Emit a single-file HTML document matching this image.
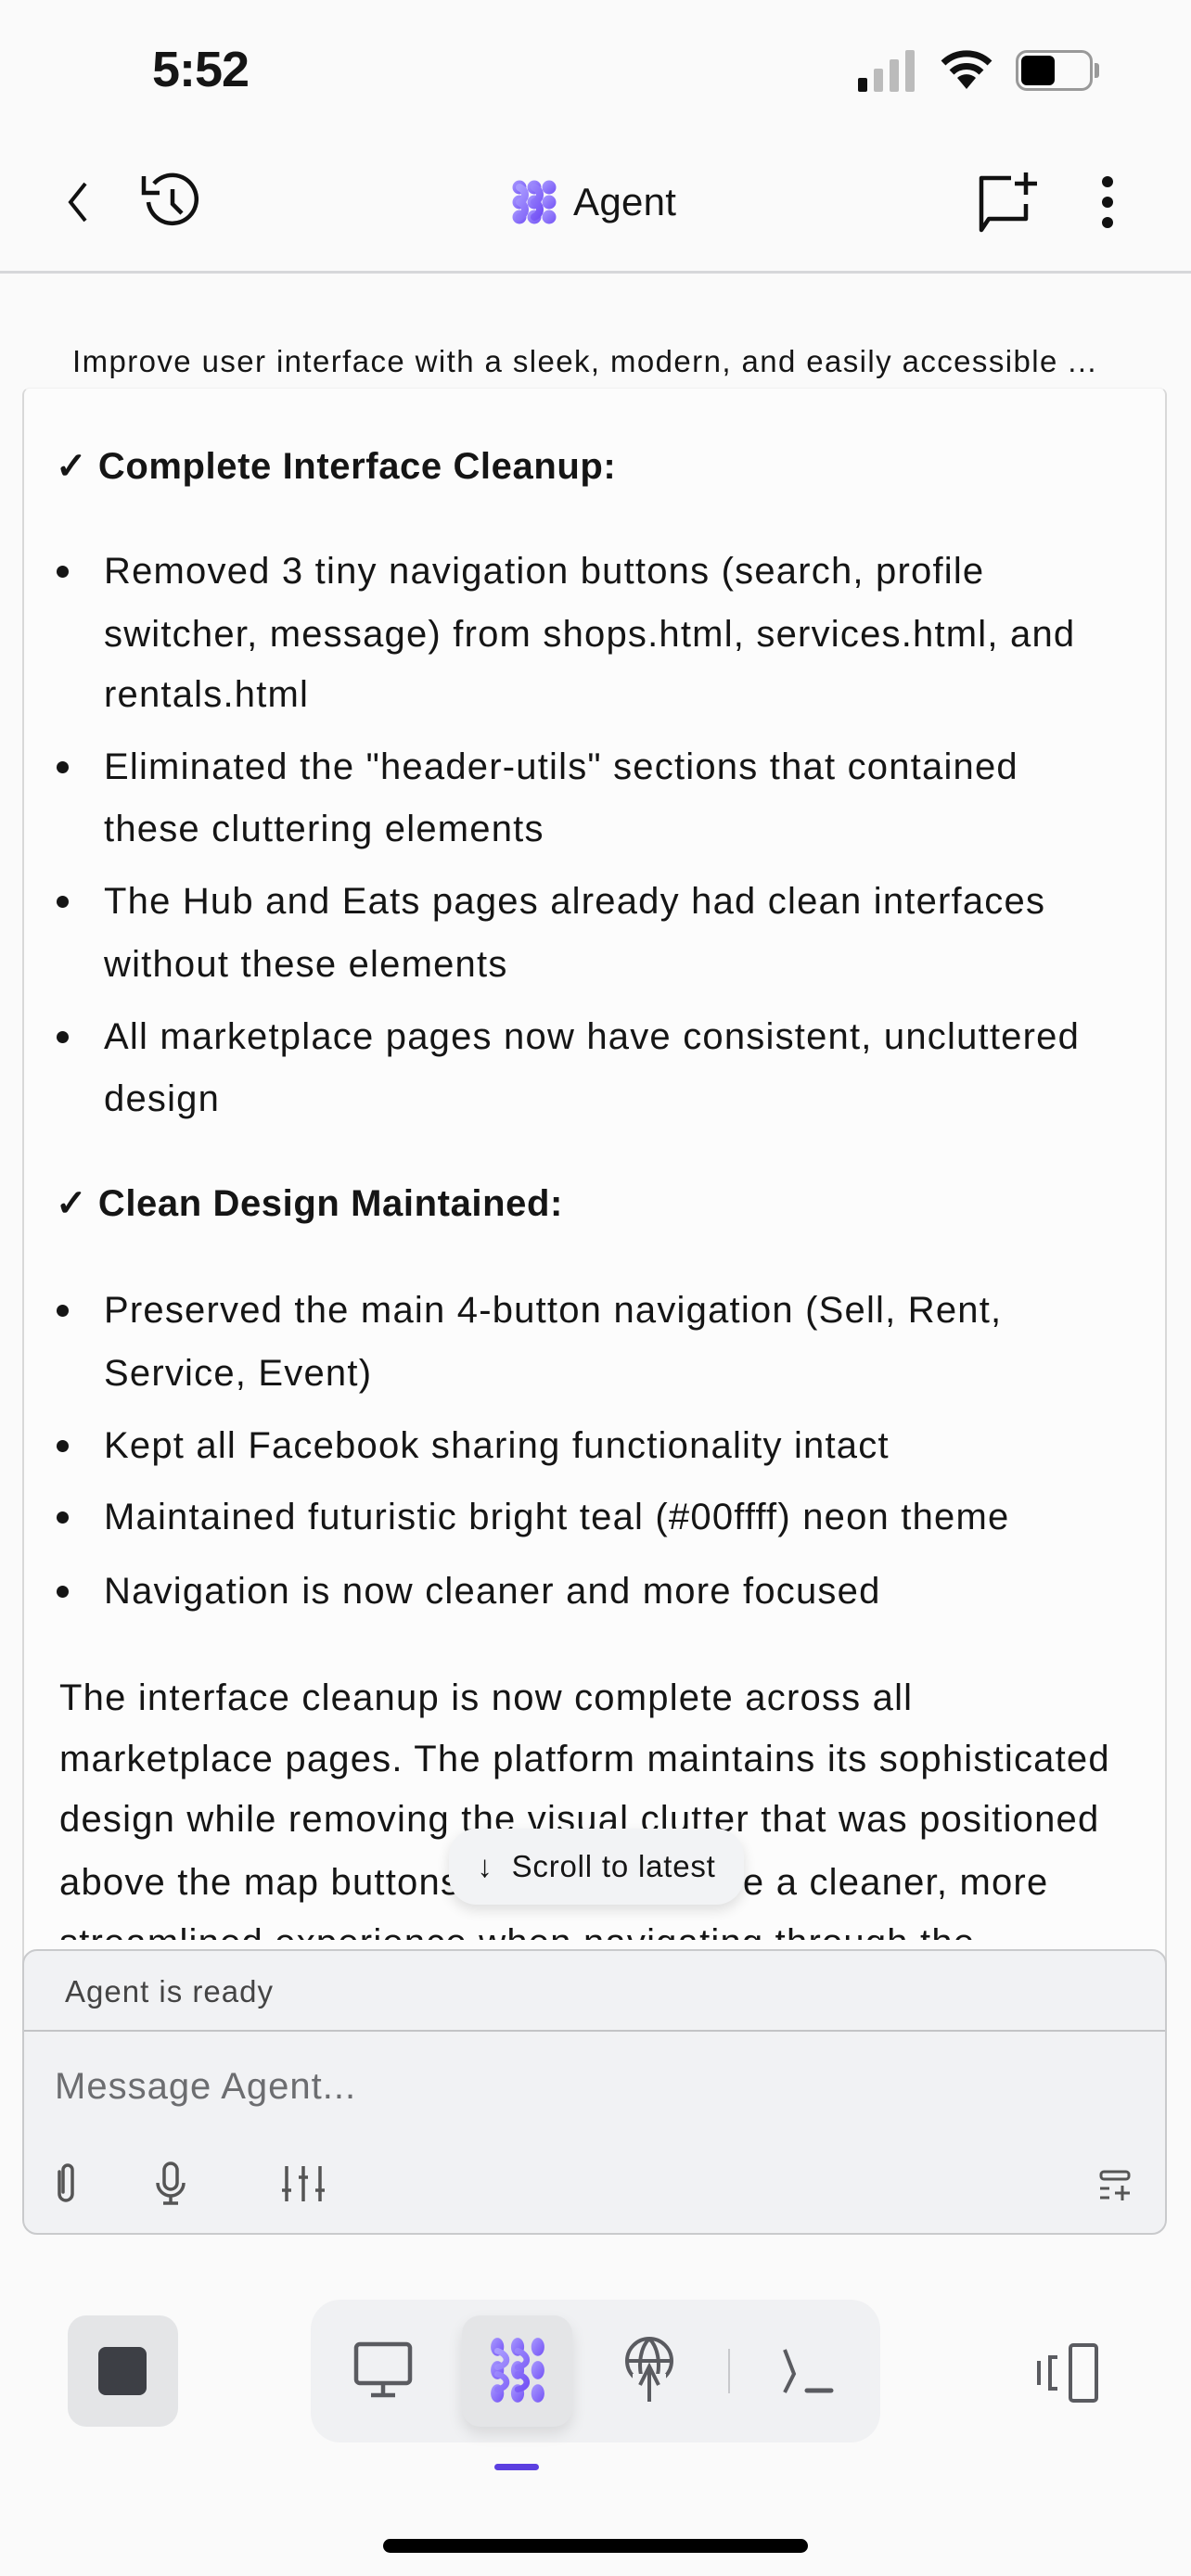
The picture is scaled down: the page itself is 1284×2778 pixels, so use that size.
<!DOCTYPE html>
<html><head><meta charset="utf-8">
<style>
*{margin:0;padding:0;box-sizing:border-box}
body{width:1284px;height:2778px;background:#fafafa;font-family:"Liberation Sans",sans-serif;color:#151515;position:relative;overflow:hidden}
.a{position:absolute}
.ln{position:absolute;white-space:nowrap;font-size:40px;line-height:66px;letter-spacing:1.2px}
.b{position:absolute;width:13px;height:13px;border-radius:50%;background:#151515;left:61px}
.h{font-weight:bold;letter-spacing:0.6px}
</style></head><body>
<svg width="0" height="0" style="position:absolute"><defs>
<linearGradient id="g" x1="0" y1="0" x2="1" y2="1"><stop offset="0" stop-color="#a99bff"/><stop offset="1" stop-color="#7452f5"/></linearGradient>
<symbol id="logo" viewBox="0 0 48 48"><g fill="url(#g)"><circle cx="8" cy="8" r="7.5"/><circle cx="24" cy="8" r="7.5"/><circle cx="40" cy="8" r="7.5"/><circle cx="8" cy="24" r="7.5"/><circle cx="24" cy="24" r="7.5"/><circle cx="40" cy="24" r="7.5"/><circle cx="8" cy="40" r="7.5"/><circle cx="24" cy="40" r="7.5"/><circle cx="40" cy="40" r="7.5"/></g><g fill="none" stroke="url(#g)" stroke-width="8" stroke-linecap="round"><path d="M8 8 C16 12 16 20 8 24 M24 8 C32 12 32 20 24 24 M8 24 C16 28 16 36 8 40 M24 24 C32 28 32 36 24 40"/></g></symbol>
</defs></svg>

<!-- status bar -->
<div class="a" style="left:164px;top:44px;font-size:54px;font-weight:bold;letter-spacing:-1px">5:52</div>
<div class="a" style="left:925px;top:84px;width:10px;height:15px;background:#111;border-radius:2px"></div>
<div class="a" style="left:942px;top:74px;width:10px;height:25px;background:#bbb;border-radius:2px"></div>
<div class="a" style="left:959px;top:64px;width:10px;height:35px;background:#bbb;border-radius:2px"></div>
<div class="a" style="left:976px;top:54px;width:10px;height:45px;background:#bbb;border-radius:2px"></div>
<svg class="a" style="left:1012px;top:52px" width="60" height="46" viewBox="0 0 60 46"><path d="M30 44 L20 32 A15 15 0 0 1 40 32 Z" fill="#111"/><path d="M14 26 A23 23 0 0 1 46 26" stroke="#111" stroke-width="7" fill="none"/><path d="M5 16 A36 36 0 0 1 55 16" stroke="#111" stroke-width="7" fill="none"/></svg>
<div class="a" style="left:1095px;top:54px;width:83px;height:44px;border:3px solid #999;border-radius:12px"></div>
<div class="a" style="left:1101px;top:60px;width:36px;height:32px;background:#000;border-radius:6px"></div>
<div class="a" style="left:1180px;top:68px;width:5px;height:16px;background:#999;border-radius:0 3px 3px 0"></div>

<!-- header -->
<svg class="a" style="left:68px;top:194px" width="30" height="48" viewBox="0 0 30 48"><path d="M24 4 L8 24 L24 44" stroke="#111" stroke-width="4" fill="none"/></svg>
<svg class="a" style="left:148px;top:186px" width="70" height="64" viewBox="0 0 70 64"><path d="M18 12 A26 26 0 1 1 12 32" stroke="#111" stroke-width="4.5" fill="none"/><path d="M7 4 V22 H24" stroke="#111" stroke-width="4.5" fill="none"/><path d="M38 18 V34 L48 44" stroke="#111" stroke-width="4.5" fill="none"/></svg>
<svg class="a" style="left:552px;top:194px" width="48" height="48"><use href="#logo"/></svg>
<div class="a" style="left:618px;top:190px;font-size:42px;line-height:56px;letter-spacing:0.3px">Agent</div>
<svg class="a" style="left:1054px;top:182px" width="70" height="70" viewBox="0 0 70 70"><path d="M36 10 H4 V66 L12 54 H52 V38" stroke="#111" stroke-width="4.5" fill="none" stroke-linejoin="round"/><path d="M52 4 V28 M40 16 H64" stroke="#111" stroke-width="4.5"/></svg>
<div class="a" style="left:1188px;top:190px;width:12px;height:12px;border-radius:50%;background:#111"></div>
<div class="a" style="left:1188px;top:212px;width:12px;height:12px;border-radius:50%;background:#111"></div>
<div class="a" style="left:1188px;top:234px;width:12px;height:12px;border-radius:50%;background:#111"></div>
<div class="a" style="left:0;top:292px;width:1284px;height:3px;background:#d6d7da"></div>

<div class="a" style="left:78px;top:368px;font-size:33px;line-height:44px;letter-spacing:1.4px;white-space:nowrap">Improve user interface with a sleek, modern, and easily accessible ...</div>

<!-- card -->
<div class="a" style="left:24px;top:418px;width:1234px;height:1700px;border-left:2px solid #d8d8d8;border-right:2px solid #d8d8d8;border-top:1px solid #f0f0f0;border-radius:8px 8px 0 0;background:#fcfcfc"></div>
<div class="a" style="left:0;top:420px;width:1284px;height:1672px;overflow:hidden">
<div style="position:relative;top:-420px">
<div class="ln h" style="left:60px;top:470px">✓ Complete Interface Cleanup:</div>
<div class="b" style="top:610px"></div>
<div class="ln" style="left:112px;top:583px">Removed 3 tiny navigation buttons (search, profile</div>
<div class="ln" style="left:112px;top:651px">switcher, message) from shops.html, services.html, and</div>
<div class="ln" style="left:112px;top:716px">rentals.html</div>
<div class="b" style="top:821px"></div>
<div class="ln" style="left:112px;top:794px">Eliminated the "header-utils" sections that contained</div>
<div class="ln" style="left:112px;top:861px">these cluttering elements</div>
<div class="b" style="top:966px"></div>
<div class="ln" style="left:112px;top:939px">The Hub and Eats pages already had clean interfaces</div>
<div class="ln" style="left:112px;top:1007px">without these elements</div>
<div class="b" style="top:1112px"></div>
<div class="ln" style="left:112px;top:1085px">All marketplace pages now have consistent, uncluttered</div>
<div class="ln" style="left:112px;top:1152px">design</div>
<div class="ln h" style="left:60px;top:1265px">✓ Clean Design Maintained:</div>
<div class="b" style="top:1407px"></div>
<div class="ln" style="left:112px;top:1380px">Preserved the main 4-button navigation (Sell, Rent,</div>
<div class="ln" style="left:112px;top:1448px">Service, Event)</div>
<div class="b" style="top:1553px"></div>
<div class="ln" style="left:112px;top:1526px">Kept all Facebook sharing functionality intact</div>
<div class="b" style="top:1630px"></div>
<div class="ln" style="left:112px;top:1603px">Maintained futuristic bright teal (#00ffff) neon theme</div>
<div class="b" style="top:1710px"></div>
<div class="ln" style="left:112px;top:1683px">Navigation is now cleaner and more focused</div>
<div class="ln" style="left:64px;top:1798px">The interface cleanup is now complete across all</div>
<div class="ln" style="left:64px;top:1864px">marketplace pages. The platform maintains its sophisticated</div>
<div class="ln" style="left:64px;top:1929px">design while removing the visual clutter that was positioned</div>
<div class="ln" style="left:64px;top:1997px">above the map buttons. Users now have a cleaner, more</div>
<div class="ln" style="left:64px;top:2062px">streamlined experience when navigating through the</div>
</div></div>

<!-- scroll pill -->
<div class="a" style="left:484px;top:1972px;width:318px;height:82px;border-radius:30px;background:#f2f3f5;box-shadow:0 6px 14px rgba(0,0,0,0.12);font-size:33px;line-height:82px;text-align:center;white-space:nowrap;letter-spacing:0.8px">↓&nbsp; Scroll to latest</div>

<!-- input -->
<div class="a" style="left:24px;top:2102px;width:1234px;height:308px;border:2px solid #c9cacc;border-radius:16px;background:#f1f2f4;overflow:hidden">
<div style="position:absolute;left:44px;top:22px;font-size:33px;color:#444;line-height:44px;letter-spacing:1px">Agent is ready</div>
<div style="position:absolute;left:0;top:85px;width:100%;height:2px;background:#c3c4c6"></div>
<div style="position:absolute;left:33px;top:120px;font-size:40px;color:#6c6d70;line-height:52px;letter-spacing:1px">Message Agent...</div>
</div>
<svg class="a" style="left:56px;top:2330px" width="30" height="48" viewBox="0 0 30 48"><path d="M8 12 V36 A7 7 0 0 0 22 36 V10 A5 5 0 0 0 12 10 V34" stroke="#555" stroke-width="3.5" fill="none" stroke-linecap="round"/></svg>
<svg class="a" style="left:164px;top:2330px" width="40" height="50" viewBox="0 0 40 50"><rect x="13" y="3" width="14" height="28" rx="7" stroke="#555" stroke-width="3.5" fill="none"/><path d="M6 24 A14 14 0 0 0 34 24 M20 38 V46 M12 46 H28" stroke="#555" stroke-width="3.5" fill="none"/></svg>
<svg class="a" style="left:302px;top:2334px" width="50" height="42" viewBox="0 0 50 42"><path d="M7 2 V40 M25 2 V40 M43 2 V40 M2 28 H12 M20 14 H30 M38 28 H48" stroke="#555" stroke-width="3.5" fill="none"/></svg>
<svg class="a" style="left:1184px;top:2340px" width="36" height="34" viewBox="0 0 36 34"><rect x="3" y="2" width="30" height="8" rx="3" stroke="#555" stroke-width="3" fill="none"/><path d="M2 20 H12 M2 30 H12 M18 25 H34 M26 17 V33" stroke="#555" stroke-width="3"/></svg>

<!-- bottom bar -->
<div class="a" style="left:73px;top:2497px;width:119px;height:120px;border-radius:20px;background:#e4e5e7"></div>
<div class="a" style="left:106px;top:2531px;width:52px;height:52px;border-radius:8px;background:#3d3f45"></div>
<div class="a" style="left:335px;top:2480px;width:614px;height:154px;border-radius:32px;background:#f0f1f3"></div>
<div class="a" style="left:498px;top:2497px;width:119px;height:120px;border-radius:20px;background:#e4e5e7;box-shadow:0 8px 16px rgba(0,0,0,0.1)"></div>
<svg class="a" style="left:520px;top:2520px" width="76" height="72" viewBox="0 0 56 66"><g fill="url(#g)"><ellipse cx="8" cy="10" rx="6.5" ry="9"/><ellipse cx="28" cy="10" rx="6.5" ry="9"/><ellipse cx="48" cy="10" rx="6.5" ry="9"/><ellipse cx="8" cy="33" rx="6.5" ry="9"/><ellipse cx="28" cy="33" rx="6.5" ry="9"/><ellipse cx="48" cy="33" rx="6.5" ry="9"/><ellipse cx="8" cy="56" rx="6.5" ry="9"/><ellipse cx="28" cy="56" rx="6.5" ry="9"/><ellipse cx="48" cy="56" rx="6.5" ry="9"/></g><g fill="none" stroke="url(#g)" stroke-width="6" stroke-linecap="round"><path d="M8 14 C20 18 20 28 8 30 M28 14 C40 18 40 28 28 30 M8 37 C20 40 20 50 8 52 M28 37 C40 40 40 50 28 52"/></g></svg>
<svg class="a" style="left:380px;top:2524px" width="66" height="66" viewBox="0 0 66 66"><rect x="4" y="4" width="58" height="42" rx="4" stroke="#5a5b60" stroke-width="4.5" fill="none"/><path d="M33 46 V58 M20 59 H46" stroke="#5a5b60" stroke-width="4.5"/></svg>
<svg class="a" style="left:672px;top:2520px" width="56" height="72" viewBox="0 0 56 72"><circle cx="28" cy="26" r="24" stroke="#5a5b60" stroke-width="4" fill="none"/><path d="M28 2 C16 14 16 38 22 50 M28 2 C40 14 40 38 34 50 M4 26 H52" stroke="#5a5b60" stroke-width="4" fill="none"/><rect x="10" y="40" width="36" height="14" fill="#f0f1f3"/><path d="M28 70 V32 M18 52 L28 32 L38 52" stroke="#5a5b60" stroke-width="4" fill="none"/></svg>
<div class="a" style="left:785px;top:2533px;width:2px;height:48px;background:#c8c9cc"></div>
<svg class="a" style="left:842px;top:2532px" width="60" height="52" viewBox="0 0 60 52"><path d="M4 2 L14 28 L4 48" stroke="#5a5b60" stroke-width="4" fill="none"/><path d="M28 46 H54" stroke="#5a5b60" stroke-width="5" stroke-linecap="round"/></svg>
<div class="a" style="left:533px;top:2657px;width:48px;height:7px;border-radius:4px;background:#5b3fe0"></div>
<svg class="a" style="left:1116px;top:2526px" width="72" height="66" viewBox="0 0 72 66"><path d="M4 20 V46" stroke="#5a5b60" stroke-width="4"/><path d="M24 16 H16 V50 H24" stroke="#5a5b60" stroke-width="4" fill="none"/><rect x="38" y="3" width="28" height="60" rx="3" stroke="#5a5b60" stroke-width="4" fill="none"/></svg>
<div class="a" style="left:413px;top:2738px;width:458px;height:15px;border-radius:8px;background:#000"></div>
</body></html>
